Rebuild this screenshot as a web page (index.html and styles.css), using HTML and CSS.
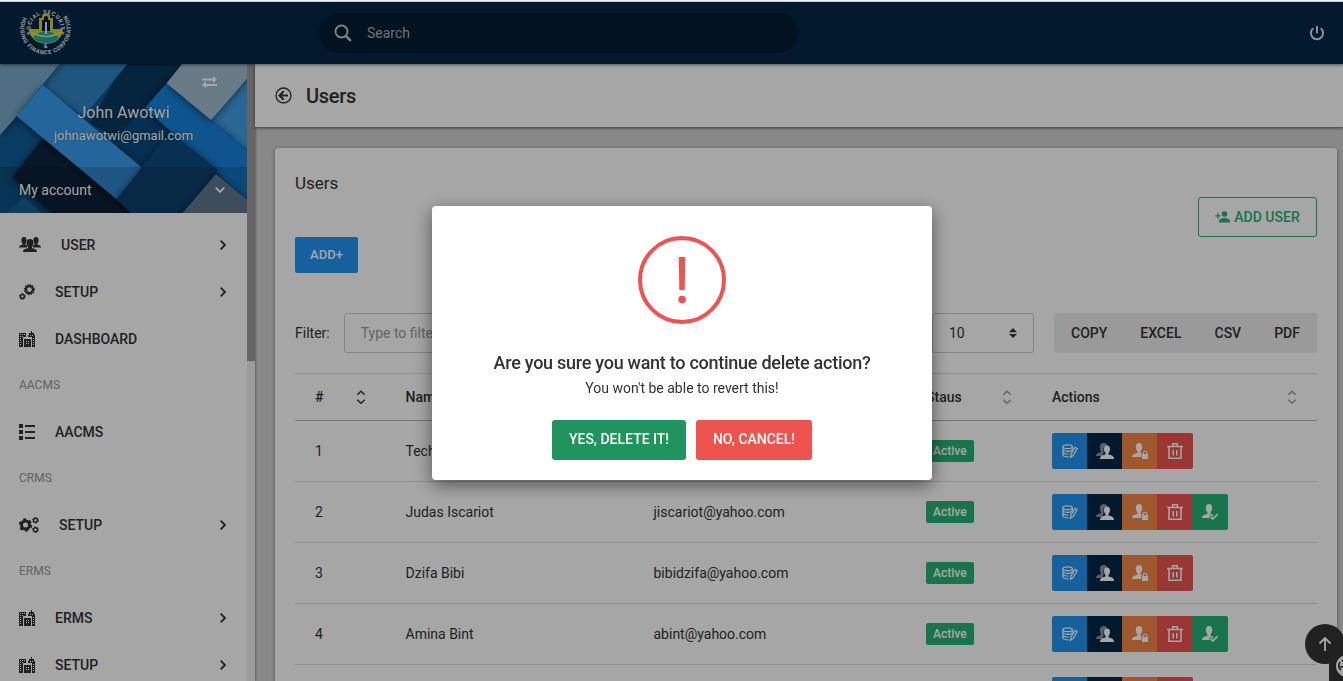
FILE: index.html
```html
<!DOCTYPE html>
<html lang="en">
<head>
<meta charset="utf-8">
<title>Users</title>
<link rel="stylesheet" href="styles.css">
</head>
<body>
<svg class="sprite" aria-hidden="true">
  <symbol id="chevron" viewBox="0 0 8 12"><path d="M1.7 1.7 6 6 1.7 10.3" fill="none" stroke="currentColor" stroke-width="1.8"/></symbol>
  <symbol id="building" viewBox="0 0 16 16"><path fill="currentColor" fill-rule="evenodd" d="M0 2h7v4H4v10H0zM1 3v1h1V3zm2 0v1h1V3zm2 0v1h1V3zM1 5v1h1V5zm2 0v1h1V5zM1 7v1h1V7zm0 2v1h1V9zm0 2v1h1v-1zm0 2v1h1v-1zM12 0h1v2h2v2h1v12h-3V6H9V4h1V2h2zm-1 4v1h1V4zm2 0v1h1V4zm1 3v1h1V7zm0 2v1h1V9zm0 2v1h1v-1zm0 2v1h1v-1zM5 8h7v8H5zm2 2v1h1v-1zm2 0v1h1v-1zm-2 2v1h1v-1zm2 0v1h1v-1z"/></symbol>
  <symbol id="gears2" viewBox="0 0 16 16"><g fill="none" stroke="currentColor"><circle cx="10.4" cy="5.6" r="3.5" stroke-width="2.3"/><circle cx="10.4" cy="5.6" r="5" stroke-width="1.2" stroke-dasharray="1.3 1.3"/><circle cx="3.4" cy="12.5" r="1.9" stroke-width="1.5"/><circle cx="3.4" cy="12.5" r="2.9" stroke-width="1" stroke-dasharray="1.1 1.17"/></g></symbol>
  <symbol id="gears3" viewBox="0 0 20 16"><g fill="none" stroke="currentColor"><circle cx="6.5" cy="8" r="4" stroke-width="3"/><circle cx="6.5" cy="8" r="5.8" stroke-width="1.8" stroke-dasharray="3 3.07"/><circle cx="16.5" cy="3.3" r="2" stroke-width="1.4"/><circle cx="16.5" cy="3.3" r="2.9" stroke-width="1" stroke-dasharray="1.5 1.53"/><circle cx="16.5" cy="12.7" r="2" stroke-width="1.4"/><circle cx="16.5" cy="12.7" r="2.9" stroke-width="1" stroke-dasharray="1.5 1.53"/></g></symbol>
  <symbol id="person" viewBox="0 0 16 16"><path fill="currentColor" d="M8 0c2.2 0 3.2 1.500 3.200 4 0 1.900-.7 3.500-1.700 4.500v1.800c2.800.4 5.500 1.700 5.500 3.700v.5H1V14c0-2 2.700-3.300 5.500-3.700V8.500C5.500 7.500 4.800 5.900 4.800 4 4.800 1.500 5.800 0 8 0z"/></symbol>
  <symbol id="db" viewBox="0 0 17 16"><g fill="none" stroke="currentColor" stroke-width="1.3"><ellipse cx="6" cy="3.500" rx="5" ry="2"/><path d="M1 3.500v8.700c0 1.100 2.500 2 6 2M1 6.600c.3 1.100 2.500 1.800 5 1.800 2 0 4-.4 4.800-1.200M1 9.500c.5 1 2.500 1.700 6 1.700M11 3.500v3.200"/><path d="m9 14.700.4-3.200 4.400-7.300 2.300 1.400-4.400 7.300z"/></g></symbol>
  <symbol id="users2" viewBox="0 0 18 16"><path opacity=".5" fill="currentColor" d="M8 0c2 0 3 1 3 2.500L7.500 5v5L6 13H0c0-2 2-3.200 4.800-3.700V7.700C3.900 6.700 4 5 4 3.500 4 1.500 5.500 0 8 0z"/><path fill="currentColor" d="M11 2.500c2 0 3 1.400 3 3.600 0 1.700-.6 3-1.500 3.900v1.500c3 .4 5.500 1.800 5.500 3.800v.7H4v-.7c0-2 2.500-3.400 5.500-3.800V10C8.600 9.100 8 7.800 8 6.100c0-2.200 1-3.600 3-3.600z"/></symbol>
  <symbol id="userlock" viewBox="0 0 16 16"><path fill="currentColor" d="M7 0c2.200 0 3.200 1.500 3.200 4 0 1.800-.7 3.200-1.600 4.200v1.700l1.600.4-1 1V14H0c0-2.500 2-3.700 5.400-4.100V8.200C4.500 7.200 3.800 5.800 3.800 4 3.800 1.500 4.800 0 7 0z"/><path fill="currentColor" d="M10 11h6v5h-6z"/><path d="M11.200 11V9.700c0-2 3.600-2 3.600 0V11" fill="none" stroke="currentColor" stroke-width="1.100"/></symbol>
  <symbol id="usercheck" viewBox="0 0 16 16"><path fill="currentColor" d="M7 0c2.200 0 3.200 1.500 3.200 4 0 1.800-.7 3.200-1.600 4.200v1.700l3 1-1 1.500-2-1.200-1.600 1.700L8 14H0c0-2.500 2-3.700 5.400-4.100V8.200C4.500 7.200 3.800 5.800 3.800 4 3.800 1.500 4.800 0 7 0z"/><path d="m8.500 12.600 2.400 2.400 4.600-4.800" fill="none" stroke="currentColor" stroke-width="1.700"/></symbol>
  <symbol id="trash" viewBox="0 0 16 16"><path d="M0 3.500h16M5.700 3V.8h4.600V3M2 4v11.200h12V4M6.200 7v5.500M9.800 7v5.500" fill="none" stroke="currentColor" stroke-width="1.600"/></symbol>
  <symbol id="sort" viewBox="0 0 10 14"><path class="sort-up" d="M1.300 4.700 5 1.200l3.700 3.500" fill="none" stroke-width="1.400"/><path class="sort-down" d="M1.300 9.800 5 13.300l3.700-3.500" fill="none" stroke-width="1.400"/></symbol>
</svg>

<header class="navbar">
  <svg class="logo" viewBox="0 0 56 52">
    <defs><path id="arc-in" d="M13.600 28A15 15 0 1 1 41.800 28"/><path id="arc-out" d="M5.400 11A25.200 25.200 0 1 0 49.600 11"/></defs>
    <g class="logo-text"><text><textPath href="#arc-in" textLength="57">SOCIAL SECURITY</textPath></text><text><textPath href="#arc-out" textLength="106">HOUSING FINANCE CORPORATION</textPath></text><text x="25.800" y="42">&amp;</text></g>
    <path d="M11 23h34a17 15 0 0 1-34 0z" fill="#d2cf37"/><path d="M15 31q8-6 13-6t13 6q-4 6-13 6t-13-6z" fill="#1aa9b4"/><path d="M13 26q15 9 30 0" fill="none" stroke="#e7e45a" stroke-width="1.500"/>
    <path d="M21 25V12h3V9q4-3 8 0v3h3v13z" fill="#d5cd38"/><path d="M24 25V14h2v-3q2-2 4 0v3h2v11z" fill="#07192b"/><path d="M27 16h2v12h-2z" fill="#e5e5e5"/>
  </svg>
  <div class="search"><svg viewBox="0 0 18 18"><circle cx="7.500" cy="7.500" r="6" fill="none" stroke="currentColor" stroke-width="1.800"/><path d="m11.800 11.800 5 5" stroke="currentColor" stroke-width="2.400"/></svg><span>Search</span></div>
  <svg class="power" viewBox="0 0 16 16"><path d="M4.300 3.300a6.100 6.100 0 1 0 7.400 0M8 1v7.200" fill="none" stroke="currentColor" stroke-width="2"/></svg>
</header>

<div class="body">
  <aside class="sidebar">
    <div class="side-content">
      <section class="profile">
        <svg class="cover" viewBox="0 192 741 447" preserveAspectRatio="none">
          <defs><filter id="sh" x="-20%" y="-20%" width="140%" height="140%"><feDropShadow dx="0" dy="4" stdDeviation="12" flood-opacity=".55"/></filter></defs>
          <path fill="#0e5d98" d="M0 192h741v447H0z"/>
          <path fill="#08385e" d="M370 192h190L430 340l-20 110-140-80z"/>
          <path fill="#3085c3" d="M170 192h212L250 350 120 255z"/>
          <g filter="url(#sh)"><path fill="#08263f" d="M128 415 38 532l115 107h320z"/></g>
          <path fill="#094a7d" d="M435 325 330 430l98 80 90-110z"/>
          <g filter="url(#sh)"><path fill="#7aa9cb" d="M0 180h188L50 348 0 405z"/></g>
          <g filter="url(#sh)"><path fill="#389df0" d="M128 255 50 348l300 250 78-93z"/></g>
          <g filter="url(#sh)"><path fill="#419ee5" d="m770 200-137 160 137 115z"/></g>
          <g filter="url(#sh)"><path fill="#1483dc" d="m500 250-65 73 330 300V472z"/></g>
          <g filter="url(#sh)"><path fill="#a3bed2" d="M556 180h200v38L633 360 500 250z"/></g>
          <g filter="url(#sh)"><path fill="#0b4b7f" d="M510 395 350 598l60 60h125l120-148z"/></g>
          <g filter="url(#sh)"><path fill="#718ca6" d="M648 522 530 660h230v-44z"/></g>
          <path fill="#1d6fac" d="m72 590-50 49h100z"/>
        </svg>
        <svg class="swap" viewBox="0 0 15 12"><path d="M0 2.500h12v2H0zM3 8h12v2H3z" fill="currentColor"/><path d="m11 0 4 3.500L11 7zM4 5 0 9l4 3z" fill="currentColor"/></svg>
        <div class="identity"><div class="name">John Awotwi</div><div class="mail">johnawotwi@gmail.com</div></div>
        <div class="account"><span>My account</span><svg viewBox="0 0 8 12"><use href="#chevron"/></svg></div>
      </section>
      <nav>
        <a class="item"><svg class="w22" viewBox="0 0 22 16"><path fill="currentColor" d="M5 0c1.800 0 2.600 1 2.600 3S7 6 6.500 6.600v1.200L8 8.500v2H0c0-1.600 1.500-2.400 3.500-2.700V6.600C2.700 6 2.400 5 2.400 3S3.200 0 5 0zm12 0c-1.800 0-2.600 1-2.600 3s.6 3 1.100 3.600v1.200l-1.500.7v2h8c0-1.600-1.500-2.400-3.500-2.700V6.600c.8-.6 1.100-1.600 1.100-3.600S18.800 0 17 0z"/><path fill="currentColor" d="M11 2c2.500 0 3.400 1.400 3.400 4 0 2-.6 3.300-1.400 4v1.300c2.500.3 5 1.200 5 3.200v.5H4v-.5c0-2 2.500-2.900 5-3.200V10c-.8-.7-1.400-2-1.400-4 0-2.600.9-4 3.400-4z"/></svg><span>USER</span><svg class="chev"><use href="#chevron"/></svg></a>
        <a class="item"><svg><use href="#gears2"/></svg><span>SETUP</span><svg class="chev"><use href="#chevron"/></svg></a>
        <a class="item"><svg><use href="#building"/></svg><span>DASHBOARD</span></a>
        <div class="group">AACMS</div>
        <a class="item"><svg viewBox="0 0 16 16"><path fill="currentColor" d="M0 0h4v4H0zm6 1h10v2H6zM0 6h4v4H0zm6 1h10v2H6zM0 12h4v4H0zm6 1h10v2H6z"/></svg><span>AACMS</span></a>
        <div class="group">CRMS</div>
        <a class="item"><svg class="w20"><use href="#gears3"/></svg><span>SETUP</span><svg class="chev"><use href="#chevron"/></svg></a>
        <div class="group">ERMS</div>
        <a class="item"><svg><use href="#building"/></svg><span>ERMS</span><svg class="chev"><use href="#chevron"/></svg></a>
        <a class="item"><svg><use href="#building"/></svg><span>SETUP</span><svg class="chev"><use href="#chevron"/></svg></a>
      </nav>
    </div>
    <div class="scrollbar"><div class="thumb"></div></div>
  </aside>

  <main class="content">
    <div class="page-header"><svg viewBox="0 0 17 17"><circle cx="8.500" cy="8.500" r="7.500" fill="none" stroke="currentColor" stroke-width="1.300"/><path d="M13 8.500H4.500M8.700 4.300 4.500 8.500l4.200 4.200" fill="none" stroke="currentColor" stroke-width="2"/></svg><h1>Users</h1></div>
    <section class="card">
      <h2>Users</h2>
      <div class="add-user"><svg viewBox="0 0 15 12"><circle cx="9.500" cy="3" r="2.800" fill="currentColor"/><path d="M4 11.500V10c0-2 3-3 5.500-3s5.500 1 5.500 3v1.500zM2.200 2.200h1.400v2h2v1.400h-2v2H2.200v-2h-2V4.200h2z" fill="currentColor"/></svg>ADD USER</div>
      <div class="add">ADD+</div>
      <div class="tools">
        <span>Filter:</span><div class="filter">Type to filter...</div>
        <div class="length"><span>10</span><svg viewBox="0 0 8 10"><path d="M0 4.300h8L4 0zM0 6h8L4 10z" fill="currentColor"/></svg></div>
        <div class="exports"><span>COPY</span><span>EXCEL</span><span>CSV</span><span>PDF</span></div>
      </div>
      <div class="table">
        <div class="row head"><div>#<svg class="sort asc"><use href="#sort"/></svg></div><div>Name<svg class="sort"><use href="#sort"/></svg></div><div>Email<svg class="sort"><use href="#sort"/></svg></div><div>Staus<svg class="sort"><use href="#sort"/></svg></div><div>Actions<svg class="sort"><use href="#sort"/></svg></div></div>
        <div class="row"><div>1</div><div>Tech</div><div></div><div><b class="badge">Active</b></div><div><span class="acts"><i class="blue"><svg><use href="#db"/></svg></i><i class="navy"><svg class="wide"><use href="#users2"/></svg></i><i class="orange"><svg><use href="#userlock"/></svg></i><i class="red"><svg><use href="#trash"/></svg></i></span></div></div>
        <div class="row"><div>2</div><div>Judas Iscariot</div><div>jiscariot@yahoo.com</div><div><b class="badge">Active</b></div><div><span class="acts"><i class="blue"><svg><use href="#db"/></svg></i><i class="navy"><svg class="wide"><use href="#users2"/></svg></i><i class="orange"><svg><use href="#userlock"/></svg></i><i class="red"><svg><use href="#trash"/></svg></i><i class="green"><svg><use href="#usercheck"/></svg></i></span></div></div>
        <div class="row"><div>3</div><div>Dzifa Bibi</div><div>bibidzifa@yahoo.com</div><div><b class="badge">Active</b></div><div><span class="acts"><i class="blue"><svg><use href="#db"/></svg></i><i class="navy"><svg class="wide"><use href="#users2"/></svg></i><i class="orange"><svg><use href="#userlock"/></svg></i><i class="red"><svg><use href="#trash"/></svg></i></span></div></div>
        <div class="row"><div>4</div><div>Amina Bint</div><div>abint@yahoo.com</div><div><b class="badge">Active</b></div><div><span class="acts"><i class="blue"><svg><use href="#db"/></svg></i><i class="navy"><svg class="wide"><use href="#users2"/></svg></i><i class="orange"><svg><use href="#userlock"/></svg></i><i class="red"><svg><use href="#trash"/></svg></i><i class="green"><svg><use href="#usercheck"/></svg></i></span></div></div>
        <div class="row"><div></div><div></div><div></div><div></div><div><span class="acts"><i class="blue"></i><i class="navy"></i><i class="orange"></i><i class="red"></i></span></div></div>
      </div>
    </section>
  </main>
</div>

<div class="to-top"><svg viewBox="0 0 14 16"><path d="M7 15V2M1.500 7.500 7 2l5.500 5.500" fill="none" stroke="currentColor" stroke-width="1.800"/></svg></div>
<div class="support"><svg viewBox="0 0 24 24"><circle cx="12" cy="12" r="11" fill="#fff"/><path d="M5 8q-3 5 1 8M7 6l3 4M4 13h6" stroke="#333" stroke-width="1.500" fill="none"/></svg></div>
<div class="overlay">
  <div class="modal">
    <svg class="alert-icon" viewBox="0 0 88 88"><circle cx="44" cy="44" r="42" fill="none" stroke="#ef5350" stroke-width="4"/><path d="M40.800 21h6.400l-.5 33h-5.400z" fill="#ef5350"/><circle cx="44.100" cy="63.600" r="3.800" fill="#ef5350"/></svg>
    <h3>Are you sure you want to continue delete action?</h3>
    <p>You won't be able to revert this!</p>
    <div class="buttons"><div class="yes">YES, DELETE IT!</div><div class="no">NO, CANCEL!</div></div>
  </div>
</div>
<div class="top-edge"></div>
</body>
</html>
```
FILE: styles.css
```css
* { box-sizing: border-box; }
body { margin: 0; height: 681px; overflow: hidden; background: #d2d2d2; color: #333; font: 14px/22px Roboto, sans-serif; }
svg { display: block; flex: none; }
h1, h2, h3, p { margin: 0; }
.sprite { position: absolute; width: 0; height: 0; }
.top-edge { position: fixed; z-index: 12; top: 0; left: 0; right: 0; height: 2px; background: #f1f3f6; border-bottom: 1px solid #cdd3da; }

.navbar { position: relative; z-index: 2; height: 64px; padding: 2px 18px 0; background: #052948; color: #fff; display: flex; align-items: center; box-shadow: 0 1px 3px rgba(0,0,0,.5); }
.logo { width: 56px; height: 52px; margin-top: -2px; }
.logo-text { font: 700 5.6px Roboto, sans-serif; fill: #e9edf0; }
.search { width: 480px; height: 40px; margin-left: 245px; border-radius: 20px; background: #041d33; display: flex; align-items: center; gap: 15px; padding-left: 15px; color: #c4ccd4; }
.search svg { width: 18px; height: 18px; }
.search span { color: #a8b1ba; }
.power { width: 16px; height: 16px; margin-left: auto; color: #ddd; }

.body { display: flex; height: 617px; }
.sidebar { width: 255px; display: flex; background: #fff; box-shadow: 1px 0 2px rgba(0,0,0,.3); }
.side-content { width: 247px; }
.scrollbar { width: 8px; background: #eee; }
.thumb { height: 297px; background: #9b9b9b; }
.profile { position: relative; height: 149px; color: #fff; overflow: hidden; text-shadow: 0 0 2px rgba(0,0,0,.5); }
.cover { position: absolute; inset: 0; width: 247px; height: 149px; }
.swap { position: absolute; top: 12px; left: 202px; width: 15px; height: 12px; }
.identity { position: relative; height: 103px; padding-top: 37px; text-align: center; }
.name { font-size: 16px; line-height: 24px; }
.mail { font-size: 13px; line-height: 22px; }
.account { position: relative; height: 46px; padding: 0 21px 0 19px; background: rgba(0,0,0,.15); display: flex; align-items: center; justify-content: space-between; }
.account svg { width: 8px; height: 12px; transform: rotate(90deg); margin-right: 2px; }
nav { padding-top: 8px; }
.item { height: 47px; padding: 0 19px; display: flex; align-items: center; gap: 20px; font-weight: 500; }
.item svg { width: 16px; height: 16px; }
.item svg.w22 { width: 22px; }
.item svg.w20 { width: 20px; }
.item svg.chev { width: 8px; height: 12px; margin-left: auto; margin-right: 1px; }
.group { height: 46px; padding: 12px 19px; font-size: 12px; color: #999; }

.content { flex: 1; }
.page-header { height: 63px; background: #fff; padding-left: 20px; display: flex; align-items: center; gap: 14px; box-shadow: 0 1px 3px rgba(0,0,0,.6); }
.page-header svg { width: 17px; height: 17px; }
h1 { font-size: 20px; line-height: 24px; font-weight: 500; letter-spacing: -.3px; }
.card { width: 1062px; height: 600px; margin: 21px 0 0 20px; padding: 23px 20px 0; background: #fff; border-radius: 3px; box-shadow: 0 1px 4px rgba(0,0,0,.4); }
h2 { font-size: 17px; line-height: 24px; font-weight: 400; }
.add-user { width: 119px; height: 40px; margin: 2px 0 0 auto; border: 1px solid #25b372; border-radius: 3px; color: #25b372; display: flex; align-items: center; justify-content: center; gap: 4px; font-weight: 500; }
.add-user svg { width: 15px; height: 12px; }
.add { width: 63px; height: 36px; border-radius: 2px; background: #2196f3; color: #fff; text-align: center; font-size: 13px; line-height: 36px; font-weight: 500; }
.tools { margin-top: 40px; height: 40px; display: flex; align-items: center; }
.filter { width: 200px; height: 40px; margin-left: 14px; border: 1px solid #ccc; border-radius: 3px; padding: 8px 16px; color: #999; }
.length { width: 102px; height: 40px; margin-left: auto; padding: 0 16px; border: 1px solid #ccc; border-radius: 3px; display: flex; align-items: center; justify-content: space-between; }
.length svg { width: 8px; height: 10px; }
.exports { height: 40px; width: 263px; margin-left: 20px; padding: 0 17px; background: #ededed; border-radius: 3px; display: flex; align-items: center; justify-content: space-between; font-weight: 500; }
.table { margin-top: 20px; border-top: 1px solid #dcdcdc; }
.row { display: grid; grid-template-columns: 90.5px 248px 272.500px 126px 1fr; height: 61px; border-bottom: 1px solid #dcdcdc; }
.row > div { display: flex; align-items: center; padding-left: 20px; }
.head { height: 47px; border-color: #b5b5b5; font-weight: 500; }
.sort { width: 10px; height: 14px; margin: 0 20px 0 auto; stroke: #999; }
.asc .sort-up, .sort.asc { stroke: #333; }
.badge { height: 22px; padding: 0 7px; border-radius: 2px; background: #25b372; color: #fff; font-size: 12px; font-weight: 500; }
.acts { display: flex; border-radius: 2px; overflow: hidden; }
.acts i { width: 35px; height: 36px; color: #fff; display: flex; align-items: center; justify-content: center; }
.acts i:last-child { width: 36px; }
.acts svg { width: 16px; height: 16px; }
.acts .wide { width: 18px; }
.blue { background: #2196f3; }
.navy { background: #052948; }
.orange { background: #f58646; }
.red { background: #ef5350; }
.green { background: #25b372; }

.to-top { position: fixed; left: 1305px; top: 624px; width: 40px; height: 40px; border-radius: 50%; background: #333; color: #fff; display: grid; place-items: center; }
.to-top svg { width: 14px; height: 16px; }
.support { position: fixed; left: 1329px; top: 649px; width: 14px; height: 32px; background: #333; overflow: hidden; padding: 5px 0 0 6px; }
.support svg { width: 24px; height: 24px; }
.overlay { position: fixed; z-index: 10; inset: 0; padding: 5px 0 0 21px; background: rgba(0,0,0,.35); display: flex; align-items: center; justify-content: center; }
.modal { width: 500px; height: 274px; padding-top: 30px; background: #fff; border-radius: 4px; box-shadow: 0 5px 18px rgba(0,0,0,.5); display: flex; flex-direction: column; align-items: center; }
.alert-icon { width: 88px; height: 88px; }
h3 { margin-top: 26px; font-size: 18px; line-height: 26px; font-weight: 500; letter-spacing: -.27px; }
.modal p { margin-top: 1px; line-height: 22px; }
.buttons { display: flex; gap: 10px; margin-top: 21px; color: #fff; text-align: center; line-height: 39px; font-weight: 500; }
.yes, .no { height: 40px; border-radius: 3px; }
.yes { width: 134px; background: #1f945f; }
.no { width: 116px; background: #ef5350; }
```
